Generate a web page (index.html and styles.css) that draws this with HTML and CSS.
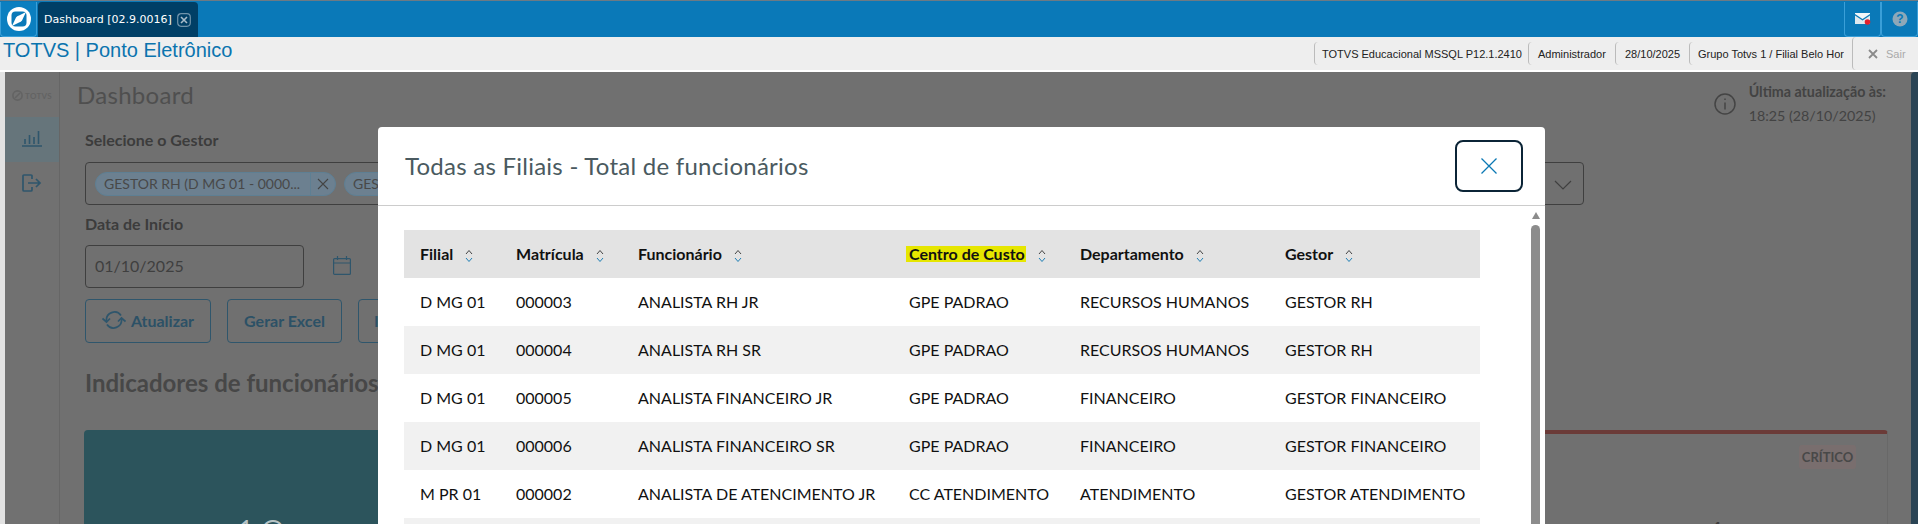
FILE: index.html
```html
<!DOCTYPE html>
<html lang="pt-BR">
<head>
    <meta charset="UTF-8">
    <title>TOTVS | Ponto Eletrônico</title>
    <link rel="stylesheet" href="styles.css">
</head>
<body>
    <div class="app">
        <header class="topbar">
            <button class="top-btn logo-btn">
                <svg width="26" height="26" viewBox="0 0 26 26">
                    <circle cx="13" cy="13" r="12" fill="#fff"/>
                    <rect x="5.500" y="5.500" width="15" height="15" rx="4" fill="#0a79b8"/>
                    <path d="M6 20 L10 11.500 Q11 9.800 13 9.500 L20 6 L16 14.500 Q15 16.200 13 16.500 Z" fill="#fff"/>
                </svg>
            </button>
            <div class="tab">
                <span>Dashboard [02.9.0016]</span>
                <svg width="14" height="14" viewBox="0 0 14 14">
                    <rect x="0.700" y="0.700" width="12.600" height="12.600" rx="3.500" fill="none" stroke="#6f93aa" stroke-width="1.200"/>
                    <path d="M4 4 L10 10 M10 4 L4 10" stroke="#a9bcc9" stroke-width="1.600"/>
                </svg>
            </div>
            <div class="top-right">
                <button class="top-btn">
                    <svg width="16" height="12" viewBox="0 0 16 12">
                        <path d="M0 1 L7.500 6 L15 1 V0 H0 Z" fill="#f2f6f9"/>
                        <path d="M0 2.400 V11 H15 V2.400 L7.500 7.400 Z" fill="#dfe8ee"/>
                        <circle cx="12.500" cy="9" r="2.800" fill="#e2202c"/>
                    </svg>
                </button>
                <button class="top-btn">
                    <svg width="16" height="16" viewBox="0 0 16 16">
                        <circle cx="8" cy="8" r="7.500" fill="#8ea8b8"/>
                        <text x="8" y="12.300" text-anchor="middle" class="help-mark">?</text>
                    </svg>
                </button>
            </div>
        </header>

        <div class="subbar">
            <div class="app-name">TOTVS | Ponto Eletrônico</div>
            <div class="session">
                <span class="session-item item-env">TOTVS Educacional MSSQL P12.1.2410</span>
                <span class="session-item item-user">Administrador</span>
                <span class="session-item item-date">28/10/2025</span>
                <span class="session-item item-branch">Grupo Totvs 1 / Filial Belo Horizonte</span>
                <span class="session-exit">
                    <svg width="10" height="10" viewBox="0 0 10 10"><path d="M1 1 L9 9 M9 1 L1 9" stroke="#8a8a8a" stroke-width="1.800"/></svg>
                    <span>Sair</span>
                </span>
            </div>
        </div>

        <div class="content">
            <aside class="sidebar">
                <div class="side-logo">
                    <svg width="11" height="11" viewBox="0 0 11 11">
                        <circle cx="5.500" cy="5.500" r="4.600" fill="none" stroke="#636363" stroke-width="1.600"/>
                        <path d="M3 8 L8 3" stroke="#636363" stroke-width="1.400"/>
                    </svg>
                    <span>TOTVS</span>
                </div>
                <div class="side-item side-active">
                    <svg width="20" height="17" viewBox="0 0 20 17" fill="none" stroke="#2f566c" stroke-width="1.600">
                        <path d="M0 16 H20 M3 14 V9 M7.500 14 V5 M12 14 V7 M16.500 14 V1"/>
                    </svg>
                </div>
                <div class="side-item">
                    <svg width="20" height="18" viewBox="0 0 20 18" fill="none" stroke="#2f566c" stroke-width="1.700">
                        <path d="M10 5 V2 Q10 1 9 1 H2 Q1 1 1 2 V16 Q1 17 2 17 H9 Q10 17 10 16 V13 M6 9 H18 M14 5 L18 9 L14 13"/>
                    </svg>
                </div>
            </aside>

            <main class="main">
                <div class="title-row">
                    <h1>Dashboard</h1>
                    <div class="updated">
                        <svg width="22" height="22" viewBox="0 0 22 22" fill="none" stroke="#444" stroke-width="1.500">
                            <circle cx="11" cy="11" r="10"/>
                            <path d="M11 9.500 V16.500 M11 5.500 V7"/>
                        </svg>
                        <div>
                            <div class="updated-label">Última atualização às:</div>
                            <div class="updated-time">18:25 (28/10/2025)</div>
                        </div>
                    </div>
                </div>

                <div class="filters">
                    <label class="field-label">Selecione o Gestor</label>
                    <div class="multi">
                        <span class="chip"><span class="chip-text">GESTOR RH (D MG 01 - 0000...</span><span class="chip-close"><svg width="12" height="12" viewBox="0 0 12 12"><path d="M1 1 L11 11 M11 1 L1 11" stroke="#444" stroke-width="1.100"/></svg></span></span>
                        <span class="chip"><span class="chip-text">GESTOR FINANCEIRO (D MG...</span></span>
                        <svg class="multi-arrow" width="18" height="10" viewBox="0 0 18 10" fill="none" stroke="#404040" stroke-width="1.200"><path d="M1 1 L9 9 L17 1"/></svg>
                    </div>

                    <label class="field-label label-date">Data de Início</label>
                    <div class="date-row">
                        <div class="date-input">01/10/2025</div>
                        <svg class="date-icon" width="18" height="19" viewBox="0 0 18 19" fill="none" stroke="#2f566c" stroke-width="1.200">
                            <rect x="0.600" y="2.600" width="16.800" height="15.800" rx="1"/>
                            <path d="M0.600 7 H17.400 M4.500 0 V4 M13.500 0 V4"/>
                        </svg>
                    </div>

                    <div class="actions">
                        <button class="btn btn-update">
                            <svg width="24" height="20" viewBox="0 0 24 20" fill="none" stroke="#2f566c" stroke-width="1.700">
                                <path d="M4.500 11 A8 8 0 0 1 19 5.500 M19.500 9 A8 8 0 0 1 5 14.500"/>
                                <path d="M0.500 8.500 L4.500 12 L8 8.500 M16 11.500 L19.500 8 L23.500 11.500"/>
                            </svg>
                            Atualizar
                        </button>
                        <button class="btn btn-excel">Gerar Excel</button>
                        <button class="btn btn-print">Imprimir</button>
                    </div>

                    <h2>Indicadores de funcionários</h2>
                </div>

                <div class="cards">
                    <div class="card card-teal"><div class="card-num">10</div></div>
                    <div class="card"></div>
                    <div class="card"></div>
                    <div class="card"></div>
                    <div class="card card-critical">
                        <span class="badge">CRÍTICO</span>
                        <div class="card-num">4</div>
                    </div>
                </div>
            </main>

            <div class="right-strip"></div>

            <section class="modal">
                <div class="modal-head">
                    <h3>Todas as Filiais - Total de funcionários</h3>
                    <button class="modal-close">
                        <svg width="16" height="16" viewBox="0 0 16 16"><path d="M0.500 0.500 L15.500 15.500 M15.500 0.500 L0.500 15.500" stroke="#0b78b4" stroke-width="1.300"/></svg>
                    </button>
                </div>
                <div class="modal-body">
                    <div class="modal-scroll">
                        <table>
                            <colgroup>
                                <col class="col-filial">
                                <col class="col-matricula">
                                <col class="col-funcionario">
                                <col class="col-centro">
                                <col class="col-depto">
                                <col>
                            </colgroup>
                            <thead>
                                <tr>
                                    <th>Filial <svg class="sort" viewBox="0 0 8 14"><path d="M1 5 L4 1.500 L7 5" stroke="#444"/><path d="M1 9 L4 12.500 L7 9" stroke="#1f7fb6"/></svg></th>
                                    <th>Matrícula <svg class="sort" viewBox="0 0 8 14"><path d="M1 5 L4 1.500 L7 5" stroke="#444"/><path d="M1 9 L4 12.500 L7 9" stroke="#1f7fb6"/></svg></th>
                                    <th>Funcionário <svg class="sort" viewBox="0 0 8 14"><path d="M1 5 L4 1.500 L7 5" stroke="#444"/><path d="M1 9 L4 12.500 L7 9" stroke="#1f7fb6"/></svg></th>
                                    <th><span class="mark">Centro de Custo</span> <svg class="sort" viewBox="0 0 8 14"><path d="M1 5 L4 1.500 L7 5" stroke="#444"/><path d="M1 9 L4 12.500 L7 9" stroke="#1f7fb6"/></svg></th>
                                    <th>Departamento <svg class="sort" viewBox="0 0 8 14"><path d="M1 5 L4 1.500 L7 5" stroke="#444"/><path d="M1 9 L4 12.500 L7 9" stroke="#1f7fb6"/></svg></th>
                                    <th>Gestor <svg class="sort" viewBox="0 0 8 14"><path d="M1 5 L4 1.500 L7 5" stroke="#444"/><path d="M1 9 L4 12.500 L7 9" stroke="#1f7fb6"/></svg></th>
                                </tr>
                            </thead>
                            <tbody>
                                <tr><td>D MG 01</td><td>000003</td><td>ANALISTA RH JR</td><td>GPE PADRAO</td><td>RECURSOS HUMANOS</td><td>GESTOR RH</td></tr>
                                <tr><td>D MG 01</td><td>000004</td><td>ANALISTA RH SR</td><td>GPE PADRAO</td><td>RECURSOS HUMANOS</td><td>GESTOR RH</td></tr>
                                <tr><td>D MG 01</td><td>000005</td><td>ANALISTA FINANCEIRO JR</td><td>GPE PADRAO</td><td>FINANCEIRO</td><td>GESTOR FINANCEIRO</td></tr>
                                <tr><td>D MG 01</td><td>000006</td><td>ANALISTA FINANCEIRO SR</td><td>GPE PADRAO</td><td>FINANCEIRO</td><td>GESTOR FINANCEIRO</td></tr>
                                <tr><td>M PR 01</td><td>000002</td><td>ANALISTA DE ATENCIMENTO JR</td><td>CC ATENDIMENTO</td><td>ATENDIMENTO</td><td>GESTOR ATENDIMENTO</td></tr>
                                <tr><td>&nbsp;</td><td></td><td></td><td></td><td></td><td></td></tr>
                            </tbody>
                        </table>
                    </div>
                    <div class="scrollbar">
                        <div class="scroll-arrow"></div>
                        <div class="scroll-thumb"></div>
                    </div>
                </div>
            </section>
        </div>
    </div>
</body>
</html>
```

FILE: styles.css
```css
* {
    box-sizing: border-box;
}
html, body {
    margin: 0;
    padding: 0;
    height: 100%;
    overflow: hidden;
    background-color: #fff;
}
body {
    font-family: Lato, "Noto Sans", sans-serif;
}
button {
    font-family: inherit;
    cursor: pointer;
}
.app {
    display: flex;
    flex-direction: column;
    height: 524px;
    overflow: hidden;
}

/* top bar */
.topbar {
    display: flex;
    flex: 0 0 37px;
    padding-top: 1px;
    background-color: #0a79b8;
    border-top: 1px solid #6d7a84;
}
.top-btn {
    display: flex;
    align-items: center;
    justify-content: center;
    width: 37px;
    height: 35px;
    padding: 0;
    background-color: #0a79b8;
    border: 1px solid #3a9fd8;
    border-top: 0;
    border-radius: 0 0 4px 4px;
}
.logo-btn {
    margin-right: 1px;
    background-color: #0b7fc0;
}
.tab {
    display: flex;
    align-items: center;
    gap: 5px;
    width: 160px;
    height: 35px;
    padding-left: 6px;
    color: #fff;
    background-color: #003f66;
    border-radius: 4px 4px 0 0;
    font-family: "DejaVu Sans", sans-serif;
    font-size: 11px;
}
.top-right {
    display: flex;
    margin-left: auto;
}
.help-mark {
    fill: #0a79b8;
    font-family: "Liberation Sans", sans-serif;
    font-size: 12px;
    font-weight: 700;
}

/* sub bar */
.subbar {
    display: flex;
    flex: 0 0 33px;
    justify-content: space-between;
    background-color: #eee;
    font-family: "Liberation Sans", sans-serif;
}
.app-name {
    padding: 1px 0 0 3px;
    color: #0b74ae;
    font-size: 20px;
    line-height: 24px;
}
.session {
    display: flex;
    align-items: flex-start;
    font-size: 11px;
    color: #222;
}
.session-item {
    height: 23px;
    margin-top: 5px;
    padding-left: 7px;
    overflow: hidden;
    line-height: 24px;
    white-space: nowrap;
    border-left: 1px solid #bbb;
    border-radius: 4px 0 0 4px;
}
.item-env { width: 214px; }
.item-user { width: 87px; padding-left: 9px; }
.item-date { width: 74px; padding-left: 9px; }
.item-branch { width: 155px; margin-right: 8px; padding-left: 8px; }
.session-exit {
    display: flex;
    align-items: center;
    gap: 8px;
    width: 66px;
    height: 33px;
    padding-left: 15px;
    color: #aaa;
    border-left: 1px solid #bbb;
    border-radius: 4px 0 0 4px;
}

/* page behind the modal */
.content {
    position: relative;
    display: flex;
    flex: 1;
    margin-top: 2px;
    overflow: hidden;
    background-color: #707070;
    border-left: 5px solid #e2e2e2;
}
.sidebar {
    flex: 0 0 55px;
    background-color: #717171;
    border-right: 1px solid #666;
}
.side-logo {
    display: flex;
    align-items: center;
    justify-content: center;
    gap: 2px;
    height: 45px;
    padding-top: 2px;
    color: #636363;
    font-size: 8px;
    font-weight: 700;
    letter-spacing: 0.3px;
}
.side-item {
    display: flex;
    align-items: center;
    justify-content: center;
    height: 45px;
    padding-bottom: 3px;
}
.side-active {
    background-color: #66757b;
}
.main {
    flex: 1;
    min-width: 0;
    padding-left: 18px;
    padding-right: 23px;
}
.title-row {
    display: flex;
    justify-content: space-between;
    height: 48px;
}
h1 {
    margin: 0 0 0 -1px;
    color: #4f4f4f;
    font-size: 24px;
    font-weight: 400;
    letter-spacing: 0.3px;
    line-height: 46px;
}
.updated {
    display: flex;
    gap: 13px;
    padding: 8px 2px 0 0;
    color: #434343;
    font-size: 14.250px;
    line-height: 24px;
}
.updated svg {
    margin-top: 13px;
}
.updated-label {
    font-weight: 700;
}
.filters {
    padding-left: 7px;
}
.field-label {
    display: block;
    margin-top: 8px;
    color: #3c3c3c;
    font-size: 16px;
    font-weight: 700;
    line-height: 24px;
}
.label-date {
    margin-top: 7px;
}
.multi {
    display: flex;
    align-items: center;
    gap: 8px;
    position: relative;
    width: 1499px;
    height: 43px;
    margin-top: 10px;
    padding-left: 9px;
    border: 1px solid #3f3f3f;
    border-radius: 4px;
}
.multi-arrow {
    position: absolute;
    right: 11px;
    top: 17px;
}
.chip {
    display: flex;
    align-items: center;
    height: 24px;
    color: #484848;
    background-color: #6c8090;
    border: 1px solid #5e7f93;
    border-radius: 12px;
    font-size: 14px;
    white-space: nowrap;
}
.chip-text {
    width: 214px;
    padding-left: 8px;
}
.chip-close {
    display: flex;
    align-items: center;
    justify-content: center;
    width: 25px;
    height: 22px;
    border-left: 1px solid #5e7f93;
}
.date-row {
    display: flex;
    align-items: center;
    gap: 29px;
    margin-top: 9px;
}
.date-input {
    width: 219px;
    height: 43px;
    padding-left: 9px;
    color: #3f3f3f;
    border: 1px solid #3f3f3f;
    border-radius: 4px;
    font-size: 16px;
    line-height: 40px;
}
.date-icon {
    margin-bottom: 2px;
}
.actions {
    display: flex;
    gap: 16px;
    margin-top: 11px;
}
.btn {
    display: flex;
    align-items: center;
    justify-content: center;
    gap: 5px;
    height: 44px;
    padding: 0 0 2px;
    color: #2c5166;
    background: none;
    border: 1px solid #2f566c;
    border-radius: 4px;
    font-size: 16px;
    font-weight: 700;
}
.btn-update { width: 126px; }
.btn-excel { width: 115px; }
.btn-print {
    justify-content: flex-start;
    width: 115px;
    padding-left: 15px;
}
h2 {
    margin: 24px 0 0;
    color: #474747;
    font-size: 24px;
    font-weight: 700;
    line-height: 32px;
    white-space: nowrap;
}
.cards {
    display: grid;
    grid-template-columns: repeat(5, 350px);
    gap: 13.500px;
    margin-top: 31px;
    margin-left: 6px;
}
.card {
    position: relative;
    height: 200px;
    border: 1px solid #686868;
    border-radius: 4px;
}
.card-teal {
    background-color: #2c545c;
    border: 0;
    color: #b8c4c6;
}
.card-critical {
    color: #3c3c3c;
    border-top: 4px solid #6b3b38;
}
.card-num {
    padding-top: 78px;
    font-size: 48px;
    font-weight: 300;
    line-height: 56px;
    text-align: center;
}
.card-critical .card-num {
    padding-top: 76px;
}
.badge {
    position: absolute;
    right: 31px;
    top: 11px;
    width: 57px;
    height: 24px;
    color: #484848;
    background-color: #796e6e;
    border-radius: 3px;
    font-size: 13px;
    font-weight: 700;
    line-height: 24px;
    text-align: center;
}
.right-strip {
    flex: 0 0 7px;
    background-color: #2a4454;
    border-radius: 4px 0 0 0;
}

/* modal */
.modal {
    position: absolute;
    left: 373px;
    top: 55px;
    bottom: 0;
    width: 1167px;
    display: flex;
    flex-direction: column;
    background-color: #fff;
    border-radius: 4px 4px 0 0;
}
.modal-head {
    display: flex;
    align-items: center;
    justify-content: space-between;
    flex: 0 0 79px;
    padding: 0 22px 0 27px;
    border-bottom: 1px solid #ccc;
}
h3 {
    margin: 0 0 2px;
    color: #4a5a60;
    font-size: 24px;
    font-weight: 400;
    letter-spacing: 0.250px;
}
.modal-close {
    display: flex;
    align-items: center;
    justify-content: center;
    width: 68px;
    height: 52px;
    padding: 0;
    background-color: #fff;
    border: 2px solid #0b2436;
    border-radius: 8px;
}
.modal-body {
    display: flex;
    flex: 1;
    min-height: 0;
}
.modal-scroll {
    width: 1153px;
    padding: 24px 0 0 26px;
}
table {
    width: 1076px;
    table-layout: fixed;
    border-collapse: collapse;
}
.col-filial { width: 96px; }
.col-matricula { width: 122px; }
.col-funcionario { width: 271px; }
.col-centro { width: 171px; }
.col-depto { width: 205px; }
th, td {
    height: 48px;
    padding: 0 0 2px 16px;
    color: #111;
    font-size: 16px;
    text-align: left;
    white-space: nowrap;
}
th {
    background-color: #e3e3e3;
    font-weight: 700;
}
tbody tr:nth-child(even) {
    background-color: #f1f1f1;
}
.sort {
    width: 8px;
    height: 14px;
    margin-left: 8px;
    fill: none;
    stroke-width: 1;
    vertical-align: -3px;
}
.mark {
    display: inline-block;
    margin-left: -3px;
    padding: 0 1px 0 3px;
    background-color: #e6e600;
    line-height: 16px;
}
.scrollbar {
    display: flex;
    flex-direction: column;
    align-items: center;
    width: 9px;
    padding-top: 6px;
}
.scroll-arrow {
    width: 0;
    height: 0;
    border-left: 4.500px solid transparent;
    border-right: 4.500px solid transparent;
    border-bottom: 7px solid #8c8c8c;
}
.scroll-thumb {
    flex: 1;
    width: 9px;
    margin-top: 6px;
    background-color: #8c8c8c;
    border-radius: 4.500px 4.500px 0 0;
}
```
